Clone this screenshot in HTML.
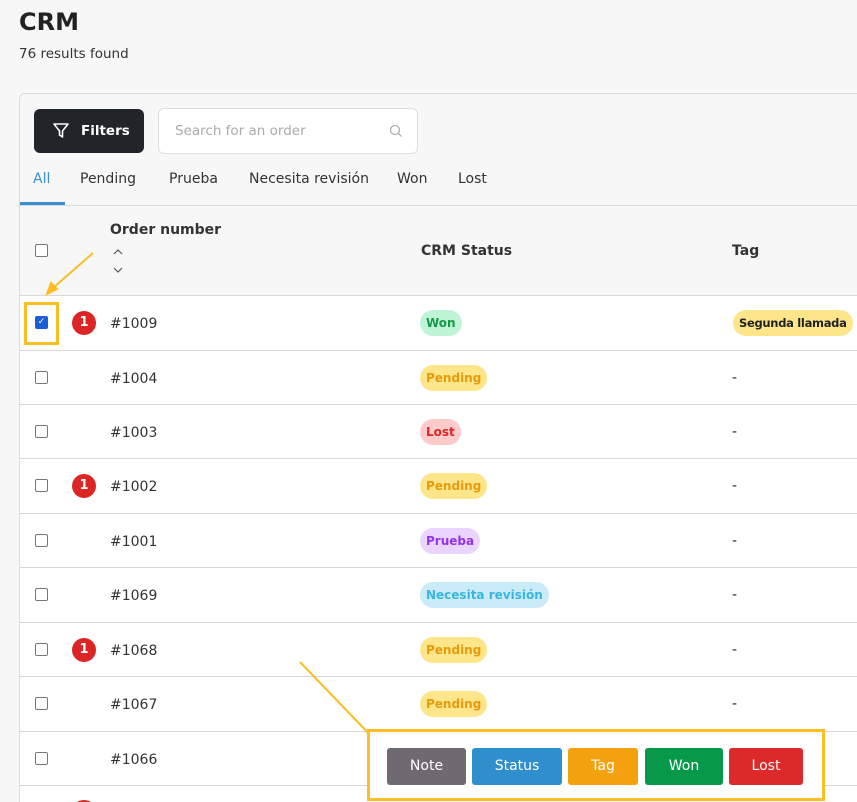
<!DOCTYPE html>
<html><head><style>
*{box-sizing:border-box;margin:0;padding:0}
html,body{width:857px;height:802px;overflow:hidden}
body{background:#f7f7f7;font-family:"DejaVu Sans","Liberation Sans",sans-serif;color:#222;position:relative}
.abs{position:absolute}
h1{position:absolute;left:19px;top:8px;font-size:24px;font-weight:bold;color:#222}
.sub{left:19px;top:46px;font-size:13.5px;color:#333}
.card{left:19px;top:93px;width:850px;height:720px;border:1px solid #ddd;border-radius:6px;background:#f7f7f7;overflow:hidden}
.filt{left:34px;top:109px;width:110px;height:44px;background:#212529;border-radius:6px;color:#fff;font-weight:bold;font-size:13.5px}
.search{left:158px;top:108px;width:260px;height:46px;border:1px solid #ddd;border-radius:6px;background:#fff;color:#aaa;font-size:13.5px}
.tab{top:171px;font-size:14px;color:#333}
.cb{width:13px;height:13px;border:1.5px solid #777;border-radius:2px;background:#fff}
.row{left:20px;width:837px;height:55px;background:#fff;border-top:1px solid #d8d8d8}
.row .cb{position:absolute;left:15px;top:20px}
.row .num{position:absolute;left:90px;top:20px;font-size:14px;color:#333}
.row .dash{position:absolute;left:712px;top:19px;font-size:14px}
.bad{position:absolute;left:52px;top:15px;width:24px;height:24px;border-radius:50%;background:#dc2626;color:#fff;font-size:13px;font-weight:bold;text-align:center;line-height:24px}
.pill{position:absolute;left:400px;top:14px;height:26px;line-height:26px;padding:0 6px;border-radius:13px;font-size:12px;font-weight:bold;white-space:nowrap}
.btn{position:absolute;top:748px;height:37px;line-height:37px;text-align:center;color:#fff;font-size:14px;border-radius:3px}
</style></head><body>
<h1>CRM</h1>
<div class="abs sub">76 results found</div>
<div class="abs card"></div>
<div class="abs filt"><svg class="abs" style="left:18px;top:13px" width="18" height="18" viewBox="0 0 18 18"><path d="M2 2h14l-5.5 7v6l-3-2V9z" fill="none" stroke="#fff" stroke-width="1.6" stroke-linejoin="round"/></svg><span class="abs" style="left:47px;top:14px">Filters</span></div>
<div class="abs search"><span class="abs" style="left:16px;top:14px">Search for an order</span><svg class="abs" style="left:230px;top:15px" width="14" height="14"><circle cx="6" cy="6" r="4.5" fill="none" stroke="#aaa" stroke-width="1.2"/><path d="M9.5 9.5l3 3" stroke="#aaa" stroke-width="1.2"/></svg></div>
<div class="abs tab" style="left:33px;color:#3a8fd0">All</div>
<div class="abs tab" style="left:80px">Pending</div>
<div class="abs tab" style="left:169px">Prueba</div>
<div class="abs tab" style="left:249px">Necesita revisión</div>
<div class="abs tab" style="left:397px">Won</div>
<div class="abs tab" style="left:458px">Lost</div>
<div class="abs" style="left:20px;top:202px;width:45px;height:3px;background:#3a8fd0"></div>
<div class="abs" style="left:20px;top:205px;width:837px;height:1px;background:#d8d8d8"></div>
<div class="abs cb" style="left:35px;top:244px"></div>
<div class="abs" style="left:110px;top:222px;font-size:14px;font-weight:bold;color:#333">Order number</div>
<svg class="abs" style="left:112px;top:248px" width="12" height="30"><path d="M2 6l4-4 4 4M2 20l4 4 4-4" fill="none" stroke="#555" stroke-width="1.2"/></svg>
<div class="abs" style="left:421px;top:243px;font-size:14px;font-weight:bold;color:#333">CRM Status</div>
<div class="abs" style="left:732px;top:243px;font-size:14px;font-weight:bold;color:#333">Tag</div>

<div class="abs row" style="top:295px"><div class="cb" style="background:#1a5fd6;border-color:#1a5fd6;color:#fff;font-size:9px;line-height:10px;text-align:center">✓</div><div class="bad">1</div><div class="num">#1009</div><div class="pill" style="background:#bff5d6;color:#149a4a">Won</div><div class="pill" style="left:713px;background:#fde68a;color:#222;font-size:11.5px;letter-spacing:-0.3px">Segunda llamada</div></div>
<div class="abs row" style="top:350px"><div class="cb"></div><div class="num">#1004</div><div class="pill" style="background:#fde68a;color:#e79a0b">Pending</div><div class="dash">-</div></div>
<div class="abs row" style="top:404px"><div class="cb"></div><div class="num">#1003</div><div class="pill" style="background:#fecaca;color:#dc2626">Lost</div><div class="dash">-</div></div>
<div class="abs row" style="top:458px"><div class="cb"></div><div class="bad">1</div><div class="num">#1002</div><div class="pill" style="background:#fde68a;color:#e79a0b">Pending</div><div class="dash">-</div></div>
<div class="abs row" style="top:513px"><div class="cb"></div><div class="num">#1001</div><div class="pill" style="background:#e9d5ff;color:#9333ea">Prueba</div><div class="dash">-</div></div>
<div class="abs row" style="top:567px"><div class="cb"></div><div class="num">#1069</div><div class="pill" style="background:#c9ecf8;color:#38b6e0">Necesita revisión</div><div class="dash">-</div></div>
<div class="abs row" style="top:622px"><div class="cb"></div><div class="bad">1</div><div class="num">#1068</div><div class="pill" style="background:#fde68a;color:#e79a0b">Pending</div><div class="dash">-</div></div>
<div class="abs row" style="top:676px"><div class="cb"></div><div class="num">#1067</div><div class="pill" style="background:#fde68a;color:#e79a0b">Pending</div><div class="dash">-</div></div>
<div class="abs row" style="top:731px"><div class="cb"></div><div class="num">#1066</div></div>
<div class="abs row" style="top:785px;height:17px"><div class="bad" style="top:14px"></div></div>

<div class="abs" style="left:24px;top:302px;width:35px;height:43px;border:3px solid #fbbf24"></div>
<svg class="abs" style="left:0;top:0" width="857" height="802"><g stroke="#fbbf24" stroke-width="2" fill="#fbbf24"><line x1="93" y1="253" x2="53" y2="288"/><path d="M47 294l4-11 6 6z"/><line x1="300" y1="662" x2="375" y2="740"/><path d="M382 747l-11-4 6-5z"/></g></svg>
<div class="abs" style="left:367px;top:729px;width:458px;height:72px;border:3px solid #fbbf24;background:#fff"></div>
<div class="btn" style="left:387px;width:79px;background:#6f6a71">Note</div>
<div class="btn" style="left:472px;width:90px;background:#2f8fcd">Status</div>
<div class="btn" style="left:568px;width:70px;background:#f3a10f">Tag</div>
<div class="btn" style="left:645px;width:78px;background:#08984a">Won</div>
<div class="btn" style="left:729px;width:74px;background:#dc2a2a">Lost</div>
</body></html>
